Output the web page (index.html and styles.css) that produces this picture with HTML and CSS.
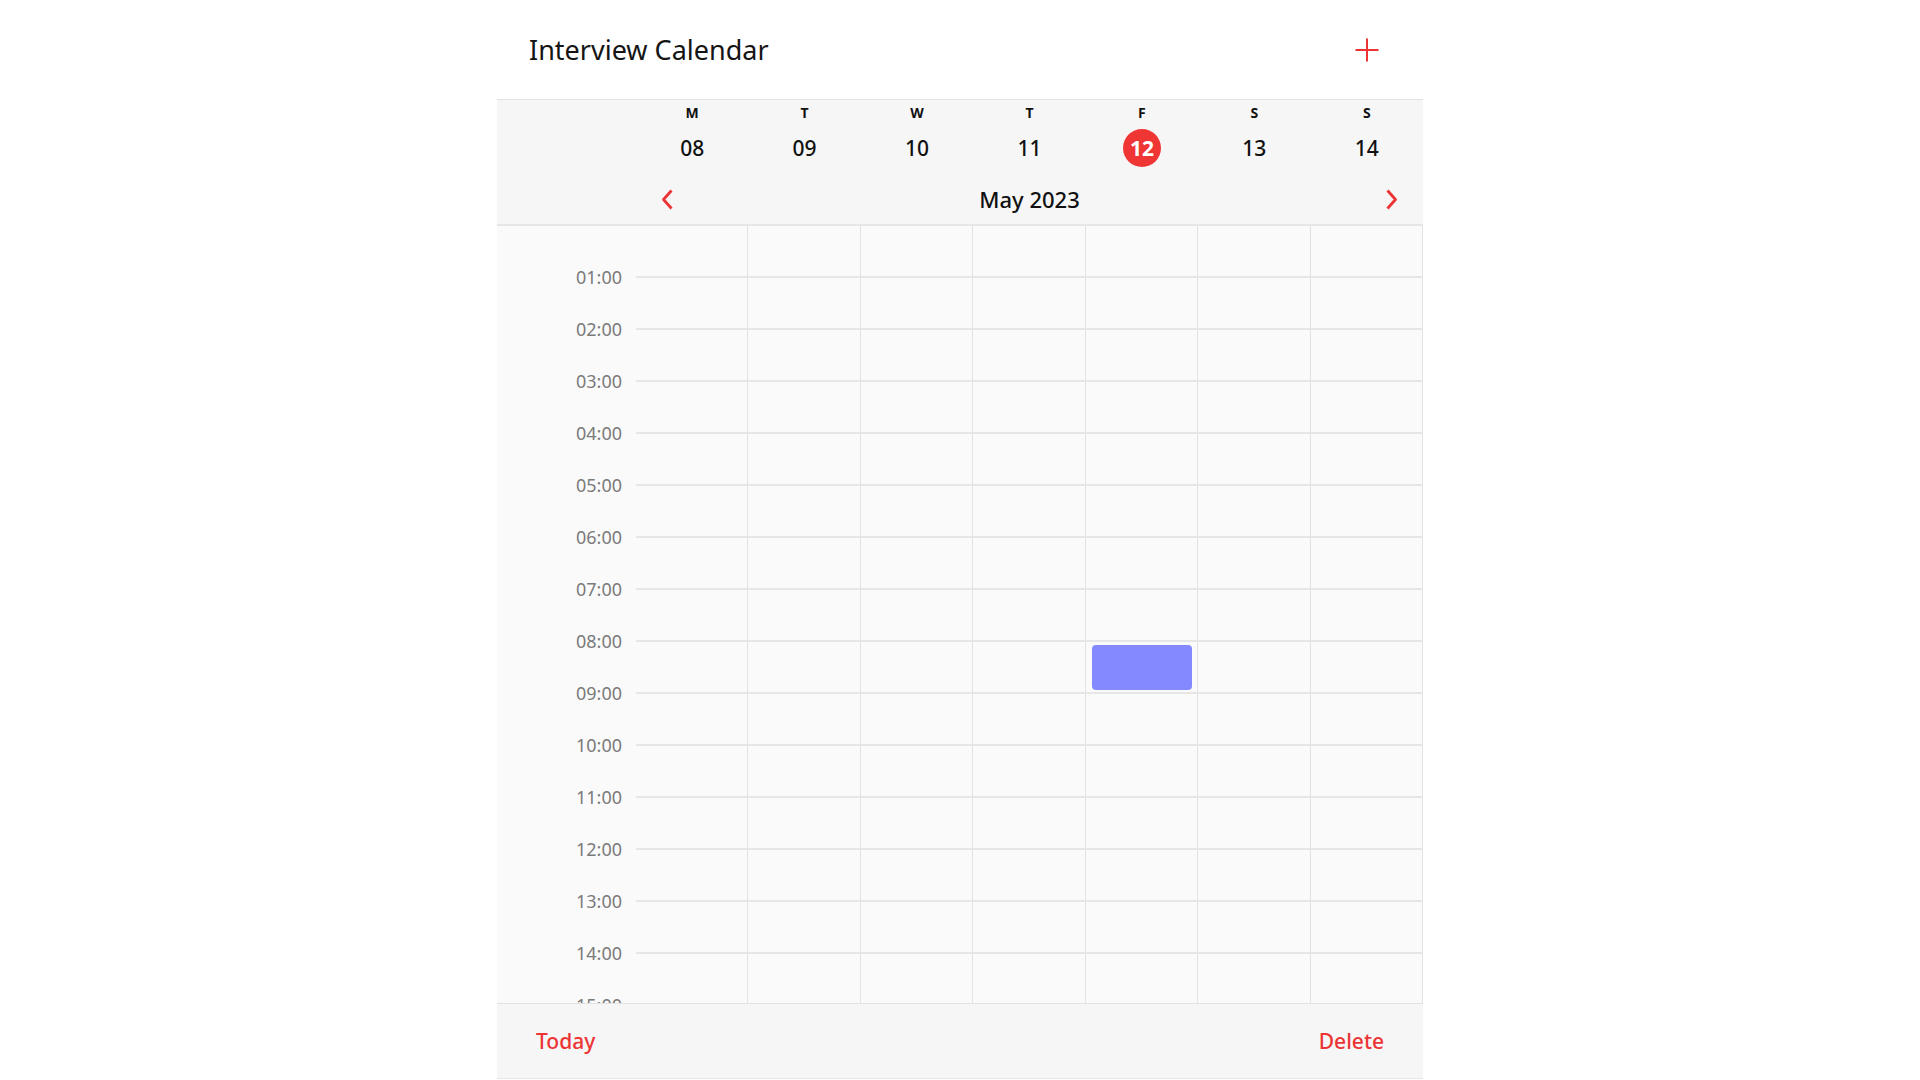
FILE: index.html
```html
<!DOCTYPE html>
<html lang="en">
<head>
<meta charset="utf-8">
<title>Interview Calendar</title>
<link rel="stylesheet" href="styles.css">
</head>
<body>
<div class="app">
  <header class="topbar">
    <h1 class="title">Interview Calendar</h1>
    <button class="add" aria-label="Add">
      <svg width="24" height="24" viewBox="0 0 24 24"><path d="M12 0.5V23.5M0.5 12H23.5" stroke="#ec3434" stroke-width="2" fill="none"/></svg>
    </button>
  </header>
  <section class="week">
    <div class="days">
      <div class="day"><span class="dow">M</span><span class="date">08</span></div>
      <div class="day"><span class="dow">T</span><span class="date">09</span></div>
      <div class="day"><span class="dow">W</span><span class="date">10</span></div>
      <div class="day"><span class="dow">T</span><span class="date">11</span></div>
      <div class="day"><span class="dow">F</span><span class="date today">12</span></div>
      <div class="day"><span class="dow">S</span><span class="date">13</span></div>
      <div class="day"><span class="dow">S</span><span class="date">14</span></div>
    </div>
    <div class="month-row">
      <button class="nav" aria-label="Previous week">
        <svg width="12" height="21" viewBox="0 0 12 21"><path d="M10.5 1.5L2.5 10.5L10.5 19.5" stroke="#ec3434" stroke-width="2.8" fill="none" stroke-linejoin="round"/></svg>
      </button>
      <span class="month">May 2023</span>
      <button class="nav" aria-label="Next week">
        <svg width="12" height="21" viewBox="0 0 12 21"><path d="M1.5 1.5L9.5 10.5L1.5 19.5" stroke="#ec3434" stroke-width="2.8" fill="none" stroke-linejoin="round"/></svg>
      </button>
    </div>
  </section>
  <main class="grid">
    <div class="hour-row"><div class="time"><span>01:00</span></div><div class="cell"></div><div class="cell"></div><div class="cell"></div><div class="cell"></div><div class="cell"></div><div class="cell"></div><div class="cell"></div></div>
    <div class="hour-row"><div class="time"><span>02:00</span></div><div class="cell"></div><div class="cell"></div><div class="cell"></div><div class="cell"></div><div class="cell"></div><div class="cell"></div><div class="cell"></div></div>
    <div class="hour-row"><div class="time"><span>03:00</span></div><div class="cell"></div><div class="cell"></div><div class="cell"></div><div class="cell"></div><div class="cell"></div><div class="cell"></div><div class="cell"></div></div>
    <div class="hour-row"><div class="time"><span>04:00</span></div><div class="cell"></div><div class="cell"></div><div class="cell"></div><div class="cell"></div><div class="cell"></div><div class="cell"></div><div class="cell"></div></div>
    <div class="hour-row"><div class="time"><span>05:00</span></div><div class="cell"></div><div class="cell"></div><div class="cell"></div><div class="cell"></div><div class="cell"></div><div class="cell"></div><div class="cell"></div></div>
    <div class="hour-row"><div class="time"><span>06:00</span></div><div class="cell"></div><div class="cell"></div><div class="cell"></div><div class="cell"></div><div class="cell"></div><div class="cell"></div><div class="cell"></div></div>
    <div class="hour-row"><div class="time"><span>07:00</span></div><div class="cell"></div><div class="cell"></div><div class="cell"></div><div class="cell"></div><div class="cell"></div><div class="cell"></div><div class="cell"></div></div>
    <div class="hour-row"><div class="time"><span>08:00</span></div><div class="cell"></div><div class="cell"></div><div class="cell"></div><div class="cell"></div><div class="cell"></div><div class="cell"></div><div class="cell"></div></div>
    <div class="hour-row"><div class="time"><span>09:00</span></div><div class="cell"></div><div class="cell"></div><div class="cell"></div><div class="cell"></div><div class="cell"><div class="event"></div></div><div class="cell"></div><div class="cell"></div></div>
    <div class="hour-row"><div class="time"><span>10:00</span></div><div class="cell"></div><div class="cell"></div><div class="cell"></div><div class="cell"></div><div class="cell"></div><div class="cell"></div><div class="cell"></div></div>
    <div class="hour-row"><div class="time"><span>11:00</span></div><div class="cell"></div><div class="cell"></div><div class="cell"></div><div class="cell"></div><div class="cell"></div><div class="cell"></div><div class="cell"></div></div>
    <div class="hour-row"><div class="time"><span>12:00</span></div><div class="cell"></div><div class="cell"></div><div class="cell"></div><div class="cell"></div><div class="cell"></div><div class="cell"></div><div class="cell"></div></div>
    <div class="hour-row"><div class="time"><span>13:00</span></div><div class="cell"></div><div class="cell"></div><div class="cell"></div><div class="cell"></div><div class="cell"></div><div class="cell"></div><div class="cell"></div></div>
    <div class="hour-row"><div class="time"><span>14:00</span></div><div class="cell"></div><div class="cell"></div><div class="cell"></div><div class="cell"></div><div class="cell"></div><div class="cell"></div><div class="cell"></div></div>
    <div class="hour-row"><div class="time"><span>15:00</span></div><div class="cell"></div><div class="cell"></div><div class="cell"></div><div class="cell"></div><div class="cell"></div><div class="cell"></div><div class="cell"></div></div>
  </main>
  <footer class="footer">
    <button class="link">Today</button>
    <button class="link">Delete</button>
  </footer>
</div>
</body>
</html>
```

FILE: styles.css
```css
* { box-sizing: border-box; }

html, body {
  margin: 0;
  padding: 0;
  background: #ffffff;
}

body {
  font-family: "Noto Sans", "Open Sans", sans-serif;
  color: #111111;
}

.app {
  width: 926px;
  margin: 0 0 0 497px;
}

button {
  background: none;
  border: none;
  padding: 0;
  margin: 0;
  font: inherit;
  cursor: pointer;
}

/* Top bar */
.topbar {
  height: 100px;
  display: flex;
  align-items: center;
  justify-content: space-between;
  padding: 0 44px 0 32px;
  border-bottom: 1px solid #e2e2e2;
}

.title {
  margin: 0;
  font-size: 27px;
  font-weight: 400;
  color: #151515;
  line-height: 40px;
}

.add {
  width: 24px;
  height: 24px;
  display: flex;
  margin-top: 1px;
}

/* Week header */
.week {
  background: #f6f6f6;
  border-bottom: 2px solid #e6e6e6;
  height: 126px;
  padding-top: 3px;
}

.days {
  display: grid;
  grid-template-columns: repeat(7, 1fr);
  padding-left: 139px;
}

.day {
  display: flex;
  flex-direction: column;
  align-items: center;
}

.dow {
  font-size: 14px;
  font-weight: 700;
  line-height: 20px;
  height: 20px;
  color: #111;
}

.date {
  margin-top: 6px;
  width: 38px;
  height: 38px;
  line-height: 38px;
  text-align: center;
  border-radius: 50%;
  font-size: 21px;
  font-weight: 500;
  color: #111;
}

.date.today {
  background: #f03535;
  color: #ffffff;
  font-weight: 700;
}

.month-row {
  margin-left: 139px;
  margin-top: 12px;
  height: 40px;
  display: flex;
  align-items: center;
  justify-content: space-between;
  padding: 0 25px;
}

.nav {
  width: 12px;
  height: 21px;
  display: flex;
}

.month {
  font-size: 22px;
  font-weight: 500;
  color: #111;
}

/* Time grid */
.grid {
  height: 777px;
  overflow: hidden;
  background: #fafafa;
}

.hour-row {
  display: grid;
  grid-template-columns: 139px repeat(7, 1fr);
  height: 52px;
}

.time {
  display: flex;
  align-items: flex-end;
  justify-content: flex-end;
  padding-right: 14px;
}

.time span {
  font-size: 18px;
  line-height: 20px;
  color: #7a7a7a;
  margin-bottom: -9px;
}

.cell {
  border-right: 1px solid #e2e2e2;
  border-bottom: 2px solid #e6e6e6;
}

.event {
  margin: 3px 5px 2px 6px;
  height: 45px;
  background: #8489ff;
  border-radius: 4px;
}

/* Footer */
.footer {
  height: 76px;
  background: #f6f6f6;
  border-top: 1px solid #e2e2e2;
  border-bottom: 1px solid #e6e6e6;
  display: flex;
  align-items: center;
  justify-content: space-between;
  padding: 0 39px 0 39px;
}

.link {
  font-size: 21px;
  font-weight: 500;
  color: #ec3434;
  line-height: 30px;
}
```
